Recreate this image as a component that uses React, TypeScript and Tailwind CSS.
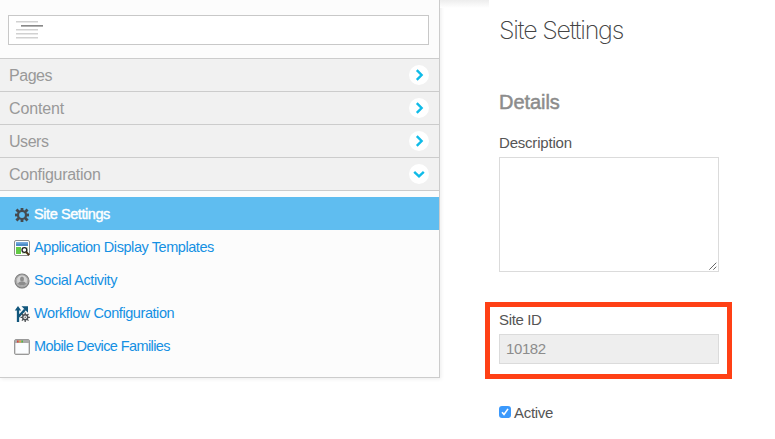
import React from "react";

const sections = [
  { name: "Pages", open: false, spacing: "tracking-[-0.45px]" },
  { name: "Content", open: false, spacing: "tracking-[-0.15px]" },
  { name: "Users", open: false, spacing: "tracking-[-0.45px]" },
  { name: "Configuration", open: true, spacing: "tracking-[-0.28px]" },
];

function Chevron({ open }: { open: boolean }) {
  return (
    <span className="flex h-5 w-5 items-center justify-center rounded-full bg-white">
      <svg width="20" height="20" viewBox="0 0 20 20" fill="none" stroke="#0fbbe8" strokeWidth="2.4">
        {open ? <path d="M5.2 7.8 10 12.4 14.8 7.8" /> : <path d="M7.8 5.2 12.6 10 7.8 14.8" />}
      </svg>
    </span>
  );
}

function Gear() {
  return (
    <svg width="16" height="16" viewBox="0 0 16 16">
      <g fill="#454b50">
        <rect x="6.6" y="1" width="2.8" height="14" />
        <rect x="1" y="6.6" width="14" height="2.8" />
        <rect x="6.6" y=".1" width="2.8" height="15.8" transform="rotate(45 8 8)" />
        <rect x="6.6" y=".1" width="2.8" height="15.8" transform="rotate(-45 8 8)" />
        <circle cx="8" cy="8" r="5.1" />
      </g>
      <circle cx="8" cy="8" r="2.9" fill="#5fbdf0" />
    </svg>
  );
}

function TemplateIcon() {
  return (
    <svg width="16" height="16" viewBox="0 0 16 16">
      <rect x=".5" y=".5" width="15" height="15" rx="1.5" fill="#fff" stroke="#8d8d8d" />
      <rect x="2" y="2" width="12" height="4" fill="#4d8cc7" />
      <rect x="2" y="2" width="12" height="1.6" fill="#79ace0" />
      <rect x="2" y="7" width="5" height="7" fill="#63cb45" />
      <rect x="8" y="7" width="6" height="7" fill="#cfe6c4" />
      <circle cx="10.4" cy="10" r="2.4" fill="#fff" stroke="#222" strokeWidth="1.3" />
      <path d="m12.2 12 2.9 3.2" stroke="#4a2f12" strokeWidth="2" />
    </svg>
  );
}

function SocialIcon() {
  return (
    <svg width="16" height="16" viewBox="0 0 16 16">
      <circle cx="8" cy="8" r="7" fill="#b2b2b2" stroke="#808080" strokeWidth="1.1" />
      <circle cx="8" cy="7.4" r="5.5" fill="#d2d2d2" stroke="#999" strokeWidth=".6" />
      <ellipse cx="8" cy="5.9" rx="2" ry="2.5" fill="#8c8c8c" />
      <path d="M4 11.1c.1-1.7 1.6-2.2 3.1-2.5h1.8c1.5.3 3 .8 3.1 2.5-2 1.7-6 1.7-8 0Z" fill="#8c8c8c" />
      <path d="M4 13v1.5M6 13.5v2M8 14v1.5M10 13.5v2M12 13v1.5" stroke="#777" strokeWidth=".6" />
    </svg>
  );
}

function WorkflowIcon() {
  return (
    <svg width="16" height="16" viewBox="0 0 16 16" fill="none">
      <path d="M4 16V2.5M4.2 11 11 3.6" stroke="#11567c" strokeWidth="2.3" />
      <path d="M4 0 7.2 4.4H.8ZM7.5.3H14v6.5Z" fill="#11567c" />
      <path d="M11.2 6.6v9.4M6.5 11.3h9.4M7.9 8l6.6 6.6M14.5 8l-6.6 6.6" stroke="#4d5155" strokeWidth="1.3" />
      <circle cx="11.2" cy="11.3" r="2.5" fill="#f4f4f4" stroke="#4d5155" strokeWidth="1.4" />
      <circle cx="11.2" cy="11.3" r=".7" fill="#4d5155" />
    </svg>
  );
}

function WindowIcon() {
  return (
    <svg width="16" height="16" viewBox="0 0 16 16">
      <rect x=".5" y=".5" width="15" height="15" rx="1.5" fill="#dadada" stroke="#999" />
      <path d="M1 1h14v3H1Z" fill="#aaa" />
      <rect x="2" y="4" width="12" height="10" rx=".5" fill="#fbfdff" />
      <path d="M3 2.5h1.6" stroke="#e0433a" strokeWidth="1.8" />
      <path d="M5.2 2.5h1.6" stroke="#e6a832" strokeWidth="1.8" />
      <path d="M7.4 2.5H9" stroke="#54b446" strokeWidth="1.8" />
    </svg>
  );
}

const links = [
  { name: "Application Display Templates", icon: <TemplateIcon />, spacing: "tracking-[-0.43px]" },
  { name: "Social Activity", icon: <SocialIcon />, spacing: "tracking-[-0.37px]" },
  { name: "Workflow Configuration", icon: <WorkflowIcon />, spacing: "tracking-[-0.43px]" },
  { name: "Mobile Device Families", icon: <WindowIcon />, spacing: "tracking-[-0.6px]" },
];

function Sidebar() {
  return (
    <aside className="h-[378px] w-[440px] shrink-0 border-r border-b border-[#ccc] bg-[#fcfcfc] shadow-[1px_1px_4px_rgba(0,0,0,0.08)]">
      <div className="h-[58px] px-2 pt-[15px]">
        <div className="h-[30px] w-[421px] border border-[#c8c8c8] bg-white pt-[5px] pl-[7px]">
          <svg width="28" height="20" viewBox="0 0 28 20" shapeRendering="crispEdges">
            <path d="M0 .5h22M0 8.5h22M0 12.5h22M0 16.5h22" stroke="#d1d1d1" />
            <path d="M0 1.5h22M0 9.5h22M0 13.5h22M0 17.5h22" stroke="#e8e8e8" />
            <path d="M5 4.5h22" stroke="#898989" />
            <path d="M5 5.5h22" stroke="#b2b2b2" />
          </svg>
        </div>
      </div>
      <nav className="border-b border-[#ccc]">
        {sections.map((s) => (
          <div key={s.name} className="flex h-[33px] items-center justify-between border-t border-[#ccc] bg-[#f1f1f1] pr-[10px] pl-[9px]">
            <span className={`pt-0.5 text-[16px] leading-[20px] text-[#999] ${s.spacing}`}>{s.name}</span>
            <Chevron open={s.open} />
          </div>
        ))}
      </nav>
      <div className="pt-1.5 text-[14.5px] leading-[18px]">
        <div className="flex h-[33px] items-center gap-1 bg-[#5fbdf0] pl-[14px] text-white">
          <span className="mt-[2px]"><Gear /></span>
          <span className="tracking-[-0.42px] [-webkit-text-stroke:0.4px_white]">Site Settings</span>
        </div>
        {links.map((l) => (
          <div key={l.name} className="flex h-[33px] items-center gap-1 pl-[14px] text-[#1590e3]">
            <span className="mt-[2px]">{l.icon}</span>
            <span className={l.spacing}>{l.name}</span>
          </div>
        ))}
      </div>
    </aside>
  );
}

export default function App() {
  return (
    <div className="flex h-[439px] w-[775px] overflow-hidden bg-white font-['Liberation_Sans',Arial,sans-serif]">
      <Sidebar />
      <div className="h-2 w-[49px] shrink-0 bg-linear-to-b from-[#ededed] to-white" />
      <main className="w-[243px] shrink-0 pl-[10px] text-[15px] leading-[18px] text-[#555]">
        <h1 className="mt-[14px] h-[32px] font-['Inter',sans-serif] text-[25px] leading-[32px] font-extralight tracking-[-1.2px] whitespace-nowrap text-[#444]">Site Settings</h1>
        <h2 className="mt-[44px] h-6 text-[20px] leading-6 tracking-[-0.05px] text-[#8c8c8c] [-webkit-text-stroke:0.5px_#8c8c8c]">Details</h2>
        <label className="mt-5 block tracking-[-0.2px]">Description</label>
        <div className="mt-[5px] flex h-[115px] w-[220px] items-end justify-end border border-[#dbdbdb] p-px">
          <svg width="8" height="8" viewBox="0 0 8 8" fill="none" stroke="#555" strokeWidth=".9">
            <path d="M.3 7.7 7.3.7M4.3 7.7l3-3" />
          </svg>
        </div>
        <section className="mt-[30px] -ml-[14px] h-[77px] w-[247px] border-[5px] border-[#ff4015] pt-1 pl-[9px]">
          <label className="block tracking-[-0.35px]">Site ID</label>
          <div className="mt-[5px] h-[30px] w-[220px] border border-[#dbdbdb] bg-[#eee] pt-[5px] pl-[6px] tracking-[-0.4px] text-[#8c8c8c]">10182</div>
        </section>
        <label className="mt-[24px] flex items-center gap-[3px] tracking-[-0.3px]">
          <span className="mb-[2px] flex h-3 w-3 items-center justify-center rounded-[3px] bg-[#3b99fc]">
            <svg width="10" height="10" viewBox="0 0 10 10" fill="none" stroke="white" strokeWidth="1.6"><path d="m2 5.2 2 2.2L8 1.9" /></svg>
          </span>
          <span className="pt-px">Active</span>
        </label>
      </main>
    </div>
  );
}
